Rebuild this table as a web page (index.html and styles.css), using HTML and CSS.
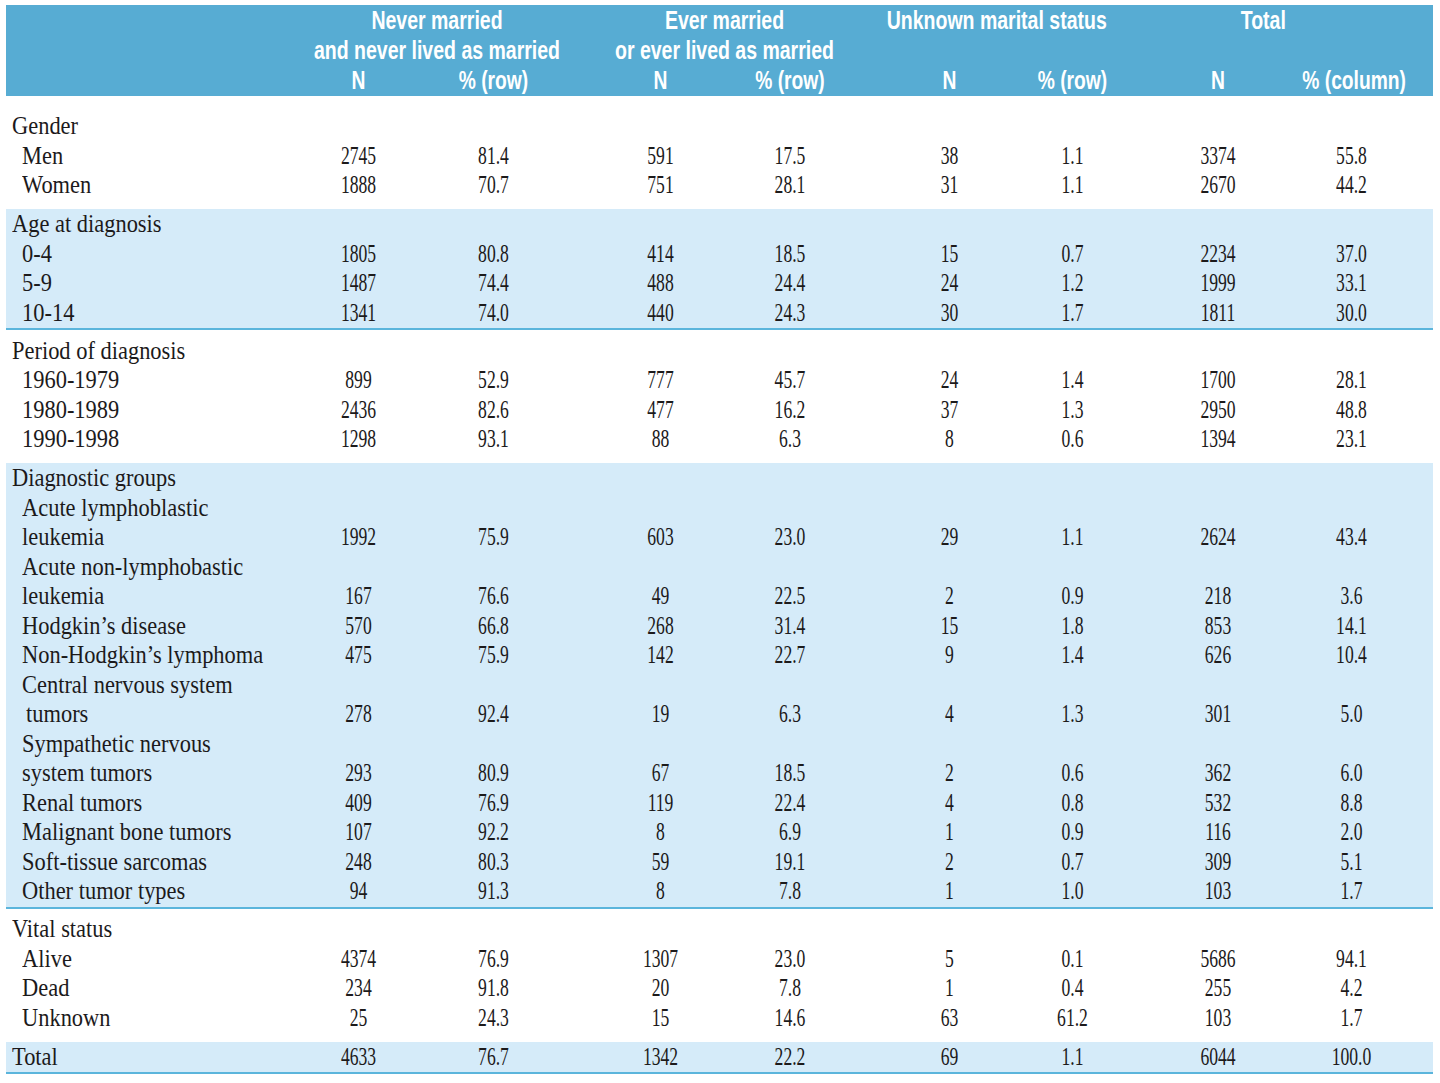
FILE: index.html
```html
<!DOCTYPE html>
<html lang="en">
<head>
<meta charset="utf-8">
<title>Marital status table</title>
<link rel="stylesheet" href="styles.css">
</head>
<body>
<div class="table">
  <div class="head">
    <div class="head-top">
      <div class="hgroup"></div>
      <div class="hgroup g1"><span>Never married</span><span>and never lived as married</span></div>
      <div class="hgroup g2"><span>Ever married</span><span>or ever lived as married</span></div>
      <div class="hgroup g3"><span>Unknown marital status</span></div>
      <div class="hgroup g4"><span>Total</span></div>
    </div>
    <div class="head-sub">
      <div class="hcell"></div>
      <div class="hcell">N</div><div class="hcell">% (row)</div>
      <div class="hcell">N</div><div class="hcell">% (row)</div>
      <div class="hcell">N</div><div class="hcell">% (row)</div>
      <div class="hcell">N</div><div class="hcell">% (column)</div>
    </div>
  </div>

  <div class="group first">
    <div class="row"><div class="lab top">Gender</div></div>
    <div class="row"><div class="lab">Men</div><div>2745</div><div>81.4</div><div>591</div><div>17.5</div><div>38</div><div>1.1</div><div>3374</div><div>55.8</div></div>
    <div class="row"><div class="lab">Women</div><div>1888</div><div>70.7</div><div>751</div><div>28.1</div><div>31</div><div>1.1</div><div>2670</div><div>44.2</div></div>
  </div>

  <div class="group band">
    <div class="row"><div class="lab top">Age at diagnosis</div></div>
    <div class="row"><div class="lab">0-4</div><div>1805</div><div>80.8</div><div>414</div><div>18.5</div><div>15</div><div>0.7</div><div>2234</div><div>37.0</div></div>
    <div class="row"><div class="lab">5-9</div><div>1487</div><div>74.4</div><div>488</div><div>24.4</div><div>24</div><div>1.2</div><div>1999</div><div>33.1</div></div>
    <div class="row"><div class="lab">10-14</div><div>1341</div><div>74.0</div><div>440</div><div>24.3</div><div>30</div><div>1.7</div><div>1811</div><div>30.0</div></div>
  </div>

  <div class="group">
    <div class="row"><div class="lab top">Period of diagnosis</div></div>
    <div class="row"><div class="lab">1960-1979</div><div>899</div><div>52.9</div><div>777</div><div>45.7</div><div>24</div><div>1.4</div><div>1700</div><div>28.1</div></div>
    <div class="row"><div class="lab">1980-1989</div><div>2436</div><div>82.6</div><div>477</div><div>16.2</div><div>37</div><div>1.3</div><div>2950</div><div>48.8</div></div>
    <div class="row"><div class="lab">1990-1998</div><div>1298</div><div>93.1</div><div>88</div><div>6.3</div><div>8</div><div>0.6</div><div>1394</div><div>23.1</div></div>
  </div>

  <div class="group band">
    <div class="row"><div class="lab top">Diagnostic groups</div></div>
    <div class="row"><div class="lab">Acute lymphoblastic</div></div>
    <div class="row"><div class="lab">leukemia</div><div>1992</div><div>75.9</div><div>603</div><div>23.0</div><div>29</div><div>1.1</div><div>2624</div><div>43.4</div></div>
    <div class="row"><div class="lab">Acute non-lymphobastic</div></div>
    <div class="row"><div class="lab">leukemia</div><div>167</div><div>76.6</div><div>49</div><div>22.5</div><div>2</div><div>0.9</div><div>218</div><div>3.6</div></div>
    <div class="row"><div class="lab">Hodgkin’s disease</div><div>570</div><div>66.8</div><div>268</div><div>31.4</div><div>15</div><div>1.8</div><div>853</div><div>14.1</div></div>
    <div class="row"><div class="lab">Non-Hodgkin’s lymphoma</div><div>475</div><div>75.9</div><div>142</div><div>22.7</div><div>9</div><div>1.4</div><div>626</div><div>10.4</div></div>
    <div class="row"><div class="lab">Central nervous system</div></div>
    <div class="row"><div class="lab cont">tumors</div><div>278</div><div>92.4</div><div>19</div><div>6.3</div><div>4</div><div>1.3</div><div>301</div><div>5.0</div></div>
    <div class="row"><div class="lab">Sympathetic nervous</div></div>
    <div class="row"><div class="lab">system tumors</div><div>293</div><div>80.9</div><div>67</div><div>18.5</div><div>2</div><div>0.6</div><div>362</div><div>6.0</div></div>
    <div class="row"><div class="lab">Renal tumors</div><div>409</div><div>76.9</div><div>119</div><div>22.4</div><div>4</div><div>0.8</div><div>532</div><div>8.8</div></div>
    <div class="row"><div class="lab">Malignant bone tumors</div><div>107</div><div>92.2</div><div>8</div><div>6.9</div><div>1</div><div>0.9</div><div>116</div><div>2.0</div></div>
    <div class="row"><div class="lab">Soft-tissue sarcomas</div><div>248</div><div>80.3</div><div>59</div><div>19.1</div><div>2</div><div>0.7</div><div>309</div><div>5.1</div></div>
    <div class="row"><div class="lab">Other tumor types</div><div>94</div><div>91.3</div><div>8</div><div>7.8</div><div>1</div><div>1.0</div><div>103</div><div>1.7</div></div>
  </div>

  <div class="group">
    <div class="row"><div class="lab top">Vital status</div></div>
    <div class="row"><div class="lab">Alive</div><div>4374</div><div>76.9</div><div>1307</div><div>23.0</div><div>5</div><div>0.1</div><div>5686</div><div>94.1</div></div>
    <div class="row"><div class="lab">Dead</div><div>234</div><div>91.8</div><div>20</div><div>7.8</div><div>1</div><div>0.4</div><div>255</div><div>4.2</div></div>
    <div class="row"><div class="lab">Unknown</div><div>25</div><div>24.3</div><div>15</div><div>14.6</div><div>63</div><div>61.2</div><div>103</div><div>1.7</div></div>
  </div>

  <div class="group band">
    <div class="row"><div class="lab top">Total</div><div>4633</div><div>76.7</div><div>1342</div><div>22.2</div><div>69</div><div>1.1</div><div>6044</div><div>100.0</div></div>
  </div>
</div>
</body>
</html>
```

FILE: styles.css
```css
html, body {
  margin: 0;
  padding: 0;
  background: #ffffff;
  overflow: hidden;
}

.table {
  --cols: 284.5px 135px 151px 148.5px 144.5px 141px 134.5px 139.5px 133px 1fr;
  width: 1427px;
  margin: 5px 0 0 6px;
  color: #1c1a1b;
  font-family: "Liberation Serif", "Times New Roman", serif;
  font-size: 25.5px;
}

/* header band */
.head {
  background: #57acd3;
  color: #ffffff;
  font-family: "Liberation Sans", Arial, sans-serif;
  font-weight: bold;
  font-size: 26px;
  line-height: 30px;
  padding: 0 0 1px;
}

.head-top,
.head-sub {
  display: grid;
  grid-template-columns: var(--cols);
}

.hgroup {
  display: flex;
  flex-direction: column;
  align-items: center;
  white-space: nowrap;
  transform: translateX(var(--gx, 0px)) scaleX(0.75);
}

.head-top .g1 { grid-column: 2 / 4; --gx: 3px; }
.head-top .g2 { grid-column: 4 / 6; --gx: 1px; }
.head-top .g3 { grid-column: 6 / 8; --gx: -11px; }
.head-top .g4 { grid-column: 8 / 10; --gx: -18px; }

.hcell {
  --dx: 0px;
  text-align: center;
  white-space: nowrap;
  transform: translateX(var(--dx)) scaleX(0.74);
}

/* body groups */
.group {
  padding: 5.5px 0 9.5px;
}

.group.first {
  margin-top: 9.5px;
}

.group.band {
  background: #d5ebf9;
  padding: 0 0 1px;
  border-bottom: 2px solid #5bb5dc;
}

.row {
  display: grid;
  grid-template-columns: var(--cols);
  height: 29.5px;
  line-height: 29.5px;
}

.row > div {
  --dx: 0px;
  text-align: center;
  white-space: nowrap;
  transform: translateX(var(--dx)) scaleX(0.69);
}

/* per-column nudges so each column sits on its own centre line */
.row > :nth-child(3), .head-sub > :nth-child(3) { --dx: -8px; }
.row > :nth-child(4), .head-sub > :nth-child(4) { --dx: 9.25px; }
.row > :nth-child(5), .head-sub > :nth-child(5) { --dx: -7.25px; }
.row > :nth-child(6), .head-sub > :nth-child(6) { --dx: 9px; }
.row > :nth-child(7), .head-sub > :nth-child(7) { --dx: -5.75px; }
.row > :nth-child(8), .head-sub > :nth-child(8) { --dx: 3.25px; }

.row > .lab {
  text-align: left;
  margin-left: 16px;
  transform: scaleX(0.88);
  transform-origin: left center;
}

.row > .lab.top {
  margin-left: 6px;
}

.row > .lab.cont {
  margin-left: 20px;
}
```
